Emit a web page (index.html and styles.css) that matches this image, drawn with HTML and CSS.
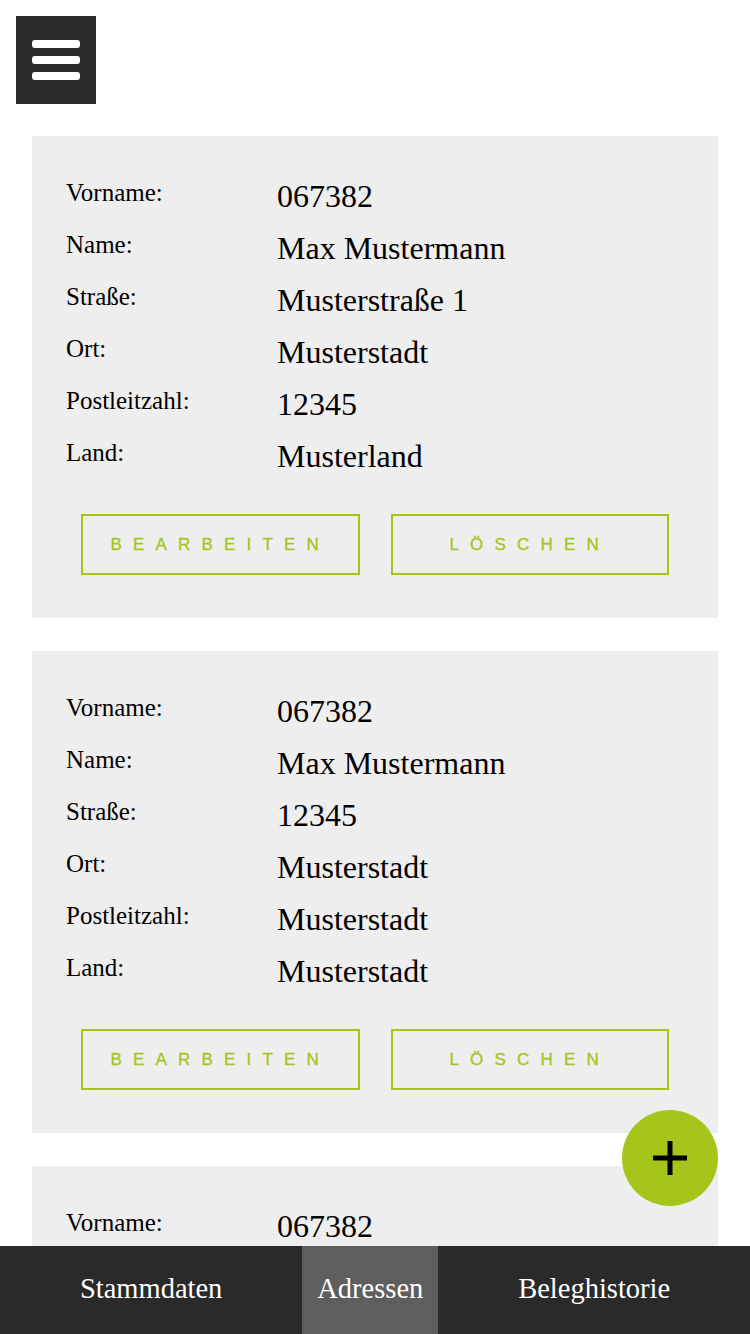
FILE: index.html
```html
<!DOCTYPE html>
<html lang="de">
<head>
<meta charset="utf-8">
<title>Adressen</title>
<link rel="stylesheet" href="styles.css">
</head>
<body>
<header class="topbar">
  <button class="menu-btn" aria-label="Menü">
    <span class="bar"></span><span class="bar"></span><span class="bar"></span>
  </button>
</header>

<main class="cards">
  <section class="card">
    <dl class="fields">
      <div class="row"><dt>Vorname:</dt><dd>067382</dd></div>
      <div class="row"><dt>Name:</dt><dd>Max Mustermann</dd></div>
      <div class="row"><dt>Straße:</dt><dd>Musterstraße 1</dd></div>
      <div class="row"><dt>Ort:</dt><dd>Musterstadt</dd></div>
      <div class="row"><dt>Postleitzahl:</dt><dd>12345</dd></div>
      <div class="row"><dt>Land:</dt><dd>Musterland</dd></div>
    </dl>
    <div class="actions">
      <button class="btn">BEARBEITEN</button>
      <button class="btn">LÖSCHEN</button>
    </div>
  </section>

  <section class="card">
    <dl class="fields">
      <div class="row"><dt>Vorname:</dt><dd>067382</dd></div>
      <div class="row"><dt>Name:</dt><dd>Max Mustermann</dd></div>
      <div class="row"><dt>Straße:</dt><dd>12345</dd></div>
      <div class="row"><dt>Ort:</dt><dd>Musterstadt</dd></div>
      <div class="row"><dt>Postleitzahl:</dt><dd>Musterstadt</dd></div>
      <div class="row"><dt>Land:</dt><dd>Musterstadt</dd></div>
    </dl>
    <div class="actions">
      <button class="btn">BEARBEITEN</button>
      <button class="btn">LÖSCHEN</button>
    </div>
  </section>

  <section class="card">
    <dl class="fields">
      <div class="row"><dt>Vorname:</dt><dd>067382</dd></div>
      <div class="row"><dt>Name:</dt><dd>Max Mustermann</dd></div>
      <div class="row"><dt>Straße:</dt><dd>Musterstraße 1</dd></div>
      <div class="row"><dt>Ort:</dt><dd>Musterstadt</dd></div>
      <div class="row"><dt>Postleitzahl:</dt><dd>12345</dd></div>
      <div class="row"><dt>Land:</dt><dd>Musterland</dd></div>
    </dl>
    <div class="actions">
      <button class="btn">BEARBEITEN</button>
      <button class="btn">LÖSCHEN</button>
    </div>
  </section>
</main>

<button class="fab" aria-label="Hinzufügen">
  <svg width="34" height="34" viewBox="0 0 34 34"><path d="M17 0V34M0 17H34" stroke="#000" stroke-width="5" fill="none"/></svg>
</button>

<nav class="tabbar">
  <a class="tab">Stammdaten</a>
  <a class="tab active">Adressen</a>
  <a class="tab">Beleghistorie</a>
</nav>
</body>
</html>
```

FILE: styles.css
```css
html, body {
  margin: 0;
  padding: 0;
  background: #ffffff;
}

body {
  font-family: "Liberation Serif", "Times New Roman", serif;
  color: #000;
  padding-bottom: 88px;
}

.topbar {
  padding: 16px 16px 0;
  display: flex;
}

.menu-btn {
  width: 80px;
  height: 88px;
  background: #2a2a2a;
  border: 0;
  padding: 24px 16px;
  margin: 0;
  display: flex;
  flex-direction: column;
  gap: 8px;
  align-items: stretch;
  justify-content: flex-start;
}

.menu-btn .bar {
  display: block;
  height: 8px;
  border-radius: 3px;
  background: #ffffff;
}

.cards {
  margin: 32px 32px 0;
  display: flex;
  flex-direction: column;
  gap: 33px;
}

.card {
  background: #eeeeee;
  padding: 42px 34px 43px;
}

.fields {
  margin: 0;
  display: flex;
  flex-direction: column;
  gap: 15px;
}

.row {
  display: grid;
  grid-template-columns: 211px 1fr;
  align-items: start;
}

.row dt {
  font-size: 25px;
  line-height: 29px;
}

.row dd {
  margin: 0;
  font-size: 32px;
  line-height: 37px;
}

.actions {
  margin: 39px 15px 0;
  display: flex;
  gap: 31px;
}

.btn {
  flex: 1 1 0;
  height: 61px;
  background: transparent;
  border: 2px solid #a4c61a;
  color: #a4c61a;
  font-family: "Liberation Sans", Arial, sans-serif;
  font-size: 17px;
  font-weight: 500;
  -webkit-text-stroke: 0.3px #a4c61a;
  letter-spacing: 11.2px;
  padding: 0;
  display: flex;
  align-items: center;
  justify-content: center;
}

.fab {
  position: fixed;
  right: 32px;
  bottom: 128px;
  width: 96px;
  height: 96px;
  border-radius: 50%;
  border: 0;
  padding: 0;
  background: #a4c61a;
  display: flex;
  align-items: center;
  justify-content: center;
}

.tabbar {
  position: fixed;
  left: 0;
  right: 0;
  bottom: 0;
  height: 88px;
  background: #2a2a2a;
  display: flex;
}

.tab {
  flex: 1 1 auto;
  display: flex;
  align-items: center;
  justify-content: center;
  color: #ffffff;
  font-size: 28.5px;
  white-space: nowrap;
  padding-bottom: 2px;
}

.tab.active {
  flex: 0 0 136px;
  background: #5e5e5e;
}
```
